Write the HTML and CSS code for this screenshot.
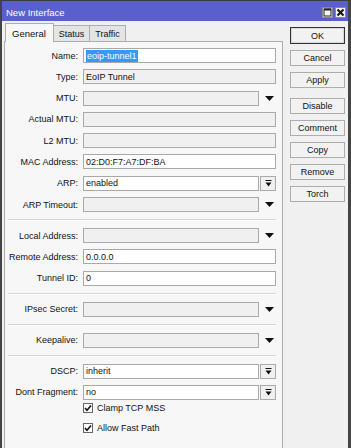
FILE: index.html
```html
<!DOCTYPE html>
<html lang="en">
<head>
  <meta charset="UTF-8">
  <title>New Interface</title>
  <link rel="stylesheet" href="styles.css">
</head>
<body>
  <div class="window">
    <div class="titlebar">
      <span class="title">New Interface</span>
      <div class="title-btns">
        <span class="tbtn">
          <svg width="9" height="9" viewBox="0 0 9 9"><rect x="1" y="1" width="7" height="7" fill="none" stroke="#222" stroke-width="1"/><line x1="1" y1="1.5" x2="8" y2="1.5" stroke="#222" stroke-width="2"/></svg>
        </span>
        <span class="tbtn">
          <svg width="9" height="9" viewBox="0 0 9 9"><path d="M1.5 1.5 L7.5 7.5 M7.5 1.5 L1.5 7.5" stroke="#111" stroke-width="2"/></svg>
        </span>
      </div>
    </div>

    <div class="content">
      <div class="tabs-area">
        <div class="tabs">
          <div class="tab active">General</div>
          <div class="tab">Status</div>
          <div class="tab">Traffic</div>
        </div>

        <div class="panel">
          <div class="section">
            <div class="row">
              <label>Name:</label>
              <div class="field"><span class="sel">eoip-tunnel1</span></div>
            </div>
            <div class="row">
              <label>Type:</label>
              <div class="field off">EoIP Tunnel</div>
            </div>
            <div class="row">
              <label>MTU:</label>
              <div class="field off"></div>
              <span class="arrow"><svg width="9" height="5" viewBox="0 0 9 5"><path d="M0 0 H9 L4.5 5 Z" fill="#111"/></svg></span>
            </div>
            <div class="row">
              <label>Actual MTU:</label>
              <div class="field off"></div>
            </div>
            <div class="row">
              <label>L2 MTU:</label>
              <div class="field off"></div>
            </div>
            <div class="row">
              <label>MAC Address:</label>
              <div class="field">02:D0:F7:A7:DF:BA</div>
            </div>
            <div class="row">
              <label>ARP:</label>
              <div class="field">enabled</div>
              <span class="combo"><svg width="7" height="7" viewBox="0 0 7 7"><rect x="0.5" y="0" width="6" height="1" fill="#111"/><path d="M0.5 2.5 H6.5 L3.5 6.5 Z" fill="#111"/></svg></span>
            </div>
            <div class="row">
              <label>ARP Timeout:</label>
              <div class="field off"></div>
              <span class="arrow"><svg width="9" height="5" viewBox="0 0 9 5"><path d="M0 0 H9 L4.5 5 Z" fill="#111"/></svg></span>
            </div>
          </div>

          <div class="sep"></div>

          <div class="section">
            <div class="row">
              <label>Local Address:</label>
              <div class="field off"></div>
              <span class="arrow"><svg width="9" height="5" viewBox="0 0 9 5"><path d="M0 0 H9 L4.5 5 Z" fill="#111"/></svg></span>
            </div>
            <div class="row">
              <label>Remote Address:</label>
              <div class="field">0.0.0.0</div>
            </div>
            <div class="row">
              <label>Tunnel ID:</label>
              <div class="field">0</div>
            </div>
          </div>

          <div class="sep"></div>

          <div class="section">
            <div class="row">
              <label>IPsec Secret:</label>
              <div class="field off"></div>
              <span class="arrow"><svg width="9" height="5" viewBox="0 0 9 5"><path d="M0 0 H9 L4.5 5 Z" fill="#111"/></svg></span>
            </div>
          </div>

          <div class="sep"></div>

          <div class="section">
            <div class="row">
              <label>Keepalive:</label>
              <div class="field off"></div>
              <span class="arrow"><svg width="9" height="5" viewBox="0 0 9 5"><path d="M0 0 H9 L4.5 5 Z" fill="#111"/></svg></span>
            </div>
          </div>

          <div class="sep"></div>

          <div class="section">
            <div class="row">
              <label>DSCP:</label>
              <div class="field">inherit</div>
              <span class="combo"><svg width="7" height="7" viewBox="0 0 7 7"><rect x="0.5" y="0" width="6" height="1" fill="#111"/><path d="M0.5 2.5 H6.5 L3.5 6.5 Z" fill="#111"/></svg></span>
            </div>
            <div class="row">
              <label>Dont Fragment:</label>
              <div class="field">no</div>
              <span class="combo"><svg width="7" height="7" viewBox="0 0 7 7"><rect x="0.5" y="0" width="6" height="1" fill="#111"/><path d="M0.5 2.5 H6.5 L3.5 6.5 Z" fill="#111"/></svg></span>
            </div>
          </div>

          <div class="checks">
            <div class="check">
              <span class="box"><svg width="8" height="8" viewBox="0 0 8 8"><path d="M1 4 L3 6.2 L7 1.5" fill="none" stroke="#111" stroke-width="1.6"/></svg></span>
              <span>Clamp TCP MSS</span>
            </div>
            <div class="check">
              <span class="box"><svg width="8" height="8" viewBox="0 0 8 8"><path d="M1 4 L3 6.2 L7 1.5" fill="none" stroke="#111" stroke-width="1.6"/></svg></span>
              <span>Allow Fast Path</span>
            </div>
          </div>
        </div>
      </div>

      <div class="buttons">
        <div class="btn default">OK</div>
        <div class="btn">Cancel</div>
        <div class="btn">Apply</div>
        <div class="btn gap">Disable</div>
        <div class="btn">Comment</div>
        <div class="btn">Copy</div>
        <div class="btn">Remove</div>
        <div class="btn">Torch</div>
      </div>
    </div>
  </div>
</body>
</html>
```

FILE: styles.css
```css
* {
  margin: 0;
  padding: 0;
  box-sizing: border-box;
}

html, body {
  width: 351px;
  height: 448px;
  overflow: hidden;
  background: #f0f0f0;
  font-family: 'Liberation Sans', Arial, sans-serif;
  font-size: 9px;
  color: #111;
}

.window {
  width: 351px;
  height: 448px;
  background: #f0f0f0;
  border-top: 1px solid #3c3c3c;
  border-left: 2px solid #444;
  border-right: 3px solid #444;
}

.titlebar {
  height: 20px;
  background: #5a60cb;
  display: flex;
  align-items: center;
  justify-content: space-between;
  padding: 2px 2px 0 4px;
}

.title {
  color: #fff;
  font-size: 9.5px;
}

.title-btns {
  display: flex;
  gap: 2px;
}

.tbtn {
  width: 11px;
  height: 11px;
  background: #f4f4f4;
  border: 1px solid #8a8a8a;
  display: flex;
  align-items: center;
  justify-content: center;
}

.content {
  display: flex;
  padding: 2px 3px 0 2px;
}

.tabs-area {
  width: 279px;
}

.tabs {
  display: flex;
  align-items: flex-end;
  height: 18px;
  padding-left: 1px;
}

.tab {
  height: 16px;
  padding: 0 5px;
  background: #e4e4e4;
  border: 1px solid #adadad;
  border-bottom: none;
  border-left: none;
  display: flex;
  align-items: center;
  font-size: 9px;
}

.tab.active {
  height: 19px;
  margin-bottom: -1px;
  background: #f7f7f7;
  border-left: 1px solid #adadad;
  padding: 0 7px 0 6px;
  font-size: 9.5px;
  position: relative;
  z-index: 1;
}

.panel {
  height: 420px;
  background: #f7f7f7;
  border: 1px solid #adadad;
  border-bottom: none;
  padding: 6px 6px 0 0;
}

.section {
  display: flex;
  flex-direction: column;
  gap: 6.3px;
}

.row {
  display: flex;
  align-items: center;
  height: 15px;
}

.row label {
  width: 73px;
  margin-right: 5px;
  text-align: right;
}

.field {
  flex: 1;
  height: 15px;
  background: #fff;
  border: 1px solid #a9a9a9;
  padding-left: 2px;
  display: flex;
  align-items: center;
  white-space: nowrap;
}

.field.off {
  background: #f0f0f0;
}

.sel {
  background: #3399ff;
  color: #fff;
  padding: 0 1px;
  line-height: 12px;
}

.arrow,
.combo {
  width: 16px;
  height: 15px;
  margin-left: 1px;
  display: flex;
  align-items: center;
  justify-content: center;
}

.arrow svg {
  margin-left: 2px;
}

.combo {
  background: #f0f0f0;
  border: 1px solid #a9a9a9;
}

.sep {
  height: 2px;
  margin: 7px 0 7px 3px;
  border-top: 1px solid #d6d6d6;
  border-bottom: 1px solid #fff;
}

.checks {
  display: flex;
  flex-direction: column;
  gap: 7px;
  padding: 2px 0 0 78px;
}

.check {
  display: flex;
  align-items: center;
  height: 13px;
  gap: 4px;
}

.box {
  width: 10px;
  height: 10px;
  background: #fff;
  border: 1px solid #666;
  display: flex;
  align-items: center;
  justify-content: center;
}

.buttons {
  width: 55px;
  margin: 4px 0 0 7px;
  display: flex;
  flex-direction: column;
  gap: 6px;
}

.btn {
  height: 16px;
  background: #f2f2f2;
  border: 1px solid #adadad;
  display: flex;
  align-items: center;
  justify-content: center;
  font-size: 9px;
}

.btn.default {
  height: 17px;
  border: 1px solid #333;
  box-shadow: inset 0 0 0 1px #d8d8d8;
}

.btn.gap {
  margin-top: 4px;
}
```
